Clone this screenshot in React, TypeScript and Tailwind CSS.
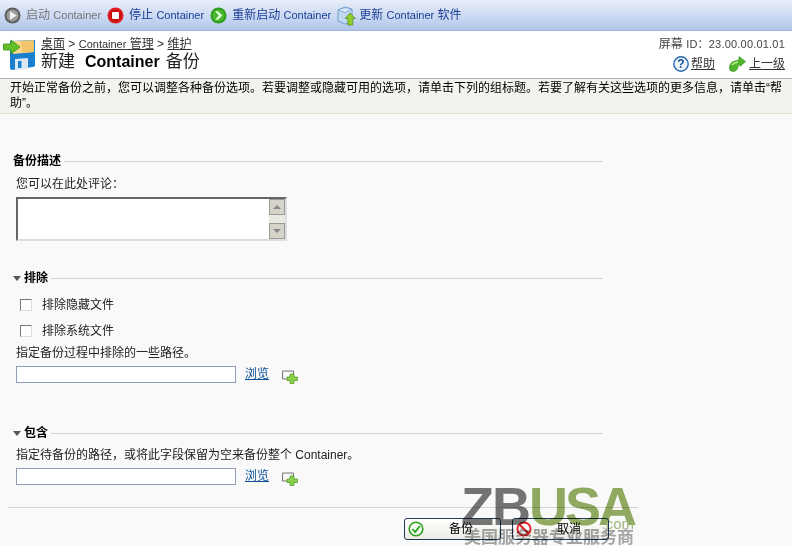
const font = { fontFamily: '"Liberation Sans", "Noto Sans CJK SC", sans-serif' }

function RoundIcon({ outer, inner, kind }: { outer: string; inner: string; kind: 'play' | 'stop' | 'restart' }) {
  return (
    <svg width="17" height="17" viewBox="0 0 17 17" className="shrink-0">
      <circle cx="8.5" cy="8.5" r="8" fill={outer} />
      <circle cx="8.5" cy="8.5" r="6" fill={inner} />
      {kind === 'play' && <path d="M6 4.2 L12.8 8.5 L6 12.8 Z" fill="#f2f2f2" />}
      {kind === 'stop' && <rect x="5" y="5" width="7" height="7" rx="1" fill="#fff" />}
      {kind === 'restart' && <path d="M5 4.2 L7.8 4.2 L12.4 8.5 L7.8 12.8 L5 12.8 L9 8.5 Z" fill="#e8ffe0" />}
    </svg>
  )
}

function UpdateIcon() {
  return (
    <svg width="19" height="21" viewBox="0 0 19 21" className="shrink-0">
      <path d="M1 5 L8 2 L15 4 L15 16 L8 19 L1 16 Z" fill="#c3d9f2" stroke="#6f9bcb" strokeWidth="1" />
      <path d="M1 5 L8 7.5 L15 4" fill="#e6f0fb" stroke="#6f9bcb" strokeWidth="0.8" />
      <path d="M13 8 L18.5 13.5 L15.8 13.5 L15.8 20 L10.8 20 L10.8 13.5 L8 13.5 Z" fill="#8ecb2f" stroke="#4c8f1a" strokeWidth="0.7" />
    </svg>
  )
}

function BackupIcon() {
  return (
    <svg width="33" height="32" viewBox="0 0 33 32" className="shrink-0 mt-[2px]">
      <path d="M7 2 L32 1 L32 26 Q32 28 30 28 L9 31 Q7 31 7 29 Z" fill="#1a7fcf" />
      <path d="M10 2 L31 1.5 L31 13 L10 15 Z" fill="#f8d98a" />
      <path d="M17 2 L31 1.5 L31 13 L20 14 Z" fill="#f2c56a" />
      <path d="M12 20 L25 19 L25 30 L12 31 Z" fill="#d9e8f4" />
      <rect x="15" y="22" width="3.5" height="7" fill="#1a7fcf" />
      <path d="M0.5 5 L8 5 L8 1 L17 8 L8 15 L8 11 L0.5 11 Z" fill="#62c026" stroke="#3a8a18" strokeWidth="0.8" />
    </svg>
  )
}

function HelpIcon() {
  return (
    <svg width="16" height="16" viewBox="0 0 16 16" className="shrink-0">
      <circle cx="8" cy="8" r="7.2" fill="#eaf3fc" stroke="#2a66b0" strokeWidth="1.4" />
      <text x="8" y="12.2" textAnchor="middle" fontSize="12" fontWeight="700" fill="#1d4f9c" fontFamily="Liberation Sans">?</text>
    </svg>
  )
}

function UpIcon() {
  return (
    <svg width="17" height="16" viewBox="0 0 17 16" className="shrink-0 block">
      <path d="M10 0.5 L16.5 5.5 L11 10.5 L11 8 Q9 8.5 9 11 Q8 15.5 3.5 15.5 Q0 15 0.5 11 Q1 6 6 5 Q9 4.5 10 3.5 Z" fill="#4fb52a" stroke="#2f8a18" strokeWidth="0.6" />
      <path d="M3 9 Q5 6.5 9 6" fill="none" stroke="#b7ec8a" strokeWidth="1.4" />
    </svg>
  )
}

function AddIcon() {
  return (
    <svg width="16" height="14" viewBox="0 0 16 14" className="ml-[13px] mt-[4px] shrink-0">
      <path d="M0.5 1 H11.5 V4 M0.5 1 V9 H5" fill="#f0f3ee" stroke="#777" strokeWidth="1" />
      <path d="M8 4 H12 V7 H15.5 V10.5 H12 V13.5 H8 V10.5 H5 V7 H8 Z" fill="#8bd14c" stroke="#4d9420" strokeWidth="0.7" />
    </svg>
  )
}

function Triangle() {
  return <span className="mr-[3px] w-0 h-0 border-x-[4px] border-x-transparent border-t-[5px] border-t-[#555] shrink-0" />
}

function SectionTitle({ title, arrow }: { title: string; arrow?: boolean }) {
  return (
    <div className="flex items-center h-[14px] w-[590px] ml-[13px]">
      {arrow && <Triangle />}
      <span className="text-[12px] font-bold text-black leading-[14px]">{title}</span>
      <span className="flex-1 h-px bg-[#d4d4d4] ml-[3px]" />
    </div>
  )
}

function PathRow() {
  return (
    <div className="flex items-start ml-[16px] h-[17px]">
      <div className="w-[220px] h-[17px] bg-white border border-[#8f9db8]" />
      <a className="ml-[9px] text-[12px] leading-[17px] text-[#0b4f94] underline">浏览</a>
      <AddIcon />
    </div>
  )
}

function CheckRow({ label }: { label: string }) {
  return (
    <div className="flex items-center h-[14px] ml-[20px]">
      <span className="w-[12px] h-[12px] bg-white border border-[#777] border-r-[#ddd] border-b-[#ddd]" />
      <span className="ml-[10px] text-[12px] text-[#222]">{label}</span>
    </div>
  )
}

function ToolItem({ icon, label, after, muted, gap }: { icon: React.ReactNode; label: string; after?: string; muted?: boolean; gap: string }) {
  return (
    <div className={`flex items-center ${gap}`}>
      {icon}
      <span className={`text-[12px] whitespace-nowrap ${muted ? 'text-[#777]' : 'text-[#1c3f94]'}`}>
        {label} <span className="text-[11px]">Container</span>{after && ` ${after}`}
      </span>
    </div>
  )
}

function FormButton({ icon, label }: { icon: React.ReactNode; label: string }) {
  return (
    <button className="relative flex items-center w-[97px] h-[22px] rounded-[3px] border border-[#1f3a5c] bg-gradient-to-b from-white to-[#ecebe4] pl-[3px]">
      {icon}
      <span className="absolute left-[44px] text-[12px] text-black">{label}</span>
    </button>
  )
}

export default function App() {
  return (
    <div style={font} className="w-[792px] h-[546px] relative overflow-hidden bg-[#f9f9f9]">
      <div className="h-[31px] flex items-center pl-[4px] gap-[6px] bg-gradient-to-b from-[#e9effa] to-[#b2c6ea] border-b border-[#9db3dc]">
        <ToolItem muted gap="gap-[5px]" label="启动" icon={<RoundIcon outer="#5f5f5f" inner="#9b9b9b" kind="play" />} />
        <ToolItem gap="gap-[5px]" label="停止" icon={<RoundIcon outer="#e01d1d" inner="#c40f0f" kind="stop" />} />
        <ToolItem gap="gap-[5px]" label="重新启动" icon={<RoundIcon outer="#2f9e1e" inner="#49b82e" kind="restart" />} />
        <ToolItem gap="gap-[3px]" label="更新" after="软件" icon={<UpdateIcon />} />
      </div>

      <div className="h-[48px] bg-white border-b border-[#a9b4bb] flex items-start justify-between pl-[3px] pr-[7px]">
        <div className="flex items-start gap-[5px] pt-[6px]">
          <BackupIcon />
          <div className="pt-[1px]">
            <div className="text-[12px] leading-[13px] text-[#333]">
              <span className="underline">桌面</span> &gt; <span className="underline"><span className="text-[11px]">Container</span> 管理</span> &gt; <span className="underline">维护</span>
            </div>
            <div className="flex items-center h-[21px] text-[17px] leading-[18px] text-[#222]">
              <span>新建</span>
              <span className="ml-[10px] mr-[6px] font-bold text-[16px] text-black">Container</span>
              <span>备份</span>
            </div>
          </div>
        </div>
        <div className="flex flex-col items-end pt-[6px]">
          <div className="text-[12px] leading-[14px] text-[#444]">屏幕 <span className="text-[11px] tracking-[0.2px]">ID：23.00.00.01.01</span></div>
          <div className="flex items-center mt-[4px] text-[12px] text-[#333]">
            <HelpIcon />
            <span className="underline ml-[2px]">帮助</span>
            <span className="ml-[14px]"><UpIcon /></span>
            <span className="underline ml-[3px]">上一级</span>
          </div>
        </div>
      </div>

      <div className="h-[35px] bg-[#f3f2ee] border-b border-[#dfdfd2] px-[10px] pt-[2px] text-[12px] leading-[15px] text-black">
        开始正常备份之前，您可以调整各种备份选项。若要调整或隐藏可用的选项，请单击下列的组标题。若要了解有关这些选项的更多信息，请单击“帮助”。
      </div>

      <div className="pt-[40px]">
        <SectionTitle title="备份描述" />
        <div className="mt-[8px] ml-[16px] text-[12px] leading-[16px] text-[#222]">您可以在此处评论：</div>
        <div className="mt-[5px] ml-[16px] w-[271px] h-[44px] bg-white border-2 border-[#666] border-r-[#ddd] border-b-[#ddd] flex justify-end">
          <div className="w-[16px] flex flex-col justify-between bg-[#e9e9e2]">
            <div className="h-[16px] bg-[#d6d4c8] border border-[#999] flex items-center justify-center">
              <span className="w-0 h-0 border-x-[4px] border-x-transparent border-b-[4px] border-b-[#888]" />
            </div>
            <div className="h-[16px] bg-[#d6d4c8] border border-[#999] flex items-center justify-center">
              <span className="w-0 h-0 border-x-[4px] border-x-transparent border-t-[4px] border-t-[#888]" />
            </div>
          </div>
        </div>

        <div className="mt-[30px]"><SectionTitle arrow title="排除" /></div>
        <div className="mt-[13px]"><CheckRow label="排除隐藏文件" /></div>
        <div className="mt-[12px]"><CheckRow label="排除系统文件" /></div>
        <div className="mt-[7px] ml-[16px] text-[12px] leading-[16px] text-[#222]">指定备份过程中排除的一些路径。</div>
        <div className="mt-[5px]"><PathRow /></div>

        <div className="mt-[43px]"><SectionTitle arrow title="包含" /></div>
        <div className="mt-[7px] ml-[16px] text-[12px] leading-[16px] text-[#222]">指定待备份的路径，或将此字段保留为空来备份整个 Container。</div>
        <div className="mt-[5px]"><PathRow /></div>

        <div className="mt-[22px] ml-[8px] w-[630px] h-px bg-[#d4d4d4]" />
        <div className="mt-[10px] ml-[404px] flex gap-[11px]">
          <FormButton
            label="备份"
            icon={
              <svg width="16" height="16" viewBox="0 0 16 16">
                <circle cx="8" cy="8" r="6.8" fill="#f4fff0" stroke="#2f9e1e" strokeWidth="1.6" />
                <path d="M4.5 8 L7.2 11 L11.8 5" fill="none" stroke="#2f9e1e" strokeWidth="1.8" />
              </svg>
            }
          />
          <FormButton
            label="取消"
            icon={
              <svg width="16" height="16" viewBox="0 0 16 16">
                <circle cx="8" cy="8" r="6.6" fill="#fff" stroke="#e0252a" strokeWidth="2" />
                <path d="M3.5 3.5 L12.5 12.5" stroke="#e0252a" strokeWidth="2.2" />
              </svg>
            }
          />
        </div>
      </div>

      {/* watermark sits over the buttons */}
      <div className="absolute left-[461px] top-[478px] w-[180px] h-[68px] pointer-events-none mix-blend-multiply">
        <div className="flex items-start h-[50px] text-[54px] leading-[56px] whitespace-nowrap">
          <span className="text-[#767676] font-bold tracking-[-2px]">ZB</span>
          <span className="text-[#93ad62] font-bold tracking-[-3px]">USA</span>
        </div>
        <div className="absolute right-[7px] top-[38px] text-[15px] leading-[15px] text-[#a5bb7c]">.com</div>
        <div className="absolute left-[3px] top-[52px] text-[17px] leading-[16px] font-bold text-[#a8a8a8] whitespace-nowrap">美国服务器专业服务商</div>
      </div>
    </div>
  )
}
